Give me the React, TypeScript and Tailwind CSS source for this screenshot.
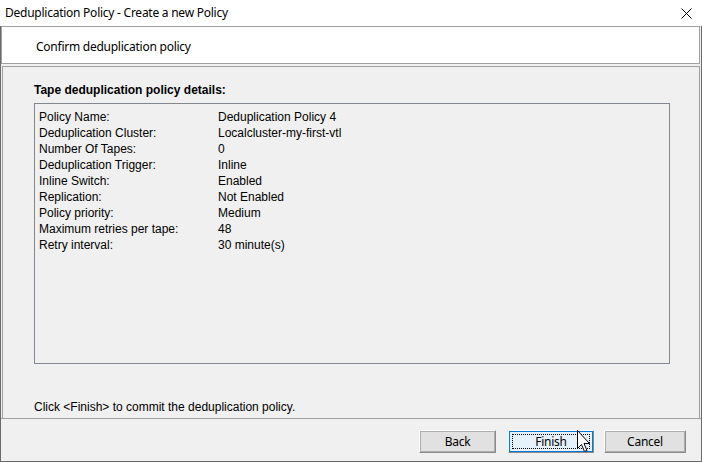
const ROWS: [string, string][] = [
  ['Policy Name:', 'Deduplication Policy 4'],
  ['Deduplication Cluster:', 'Localcluster-my-first-vtl'],
  ['Number Of Tapes:', '0'],
  ['Deduplication Trigger:', 'Inline'],
  ['Inline Switch:', 'Enabled'],
  ['Replication:', 'Not Enabled'],
  ['Policy priority:', 'Medium'],
  ['Maximum retries per tape:', '48'],
  ['Retry interval:', '30 minute(s)'],
]

const ui = "font-['Noto_Sans',sans-serif] tracking-[-0.25px]"
const classic = "font-['Liberation_Sans',Arial,sans-serif]"

function Button({ label, focused, width }: { label: string; focused?: boolean; width: string }) {
  return (
    <div className={`${width} h-[23px] border-t border-l border-white border-b border-r border-b-[#8a8a8a] border-r-[#8a8a8a]`}>
      <div
        className={`h-full w-full flex items-center justify-center text-[12px] text-black ${ui} border ${
          focused ? 'bg-[#e5f1fb] border-[#0078d7]' : 'bg-[#e1e1e1] border-[#adadad]'
        }`}
      >
        {focused ? (
          <div className="w-[calc(100%-4px)] h-[calc(100%-4px)] border border-dotted border-black flex items-center justify-center">
            {label}
          </div>
        ) : (
          label
        )}
      </div>
    </div>
  )
}

export default function App() {
  return (
    <div className="w-[702px] h-[462px] bg-white flex flex-col relative overflow-hidden">
      {/* title bar */}
      <div className="h-[26px] flex items-center justify-between pl-[5px] pr-[10px] shrink-0">
        <span className={`text-[12px] text-black ${ui}`}>Deduplication Policy - Create a new Policy</span>
        <svg width="11" height="11" viewBox="0 0 11 11" className="mt-[1px]">
          <path d="M0.5 0.5 L10.5 10.5 M10.5 0.5 L0.5 10.5" stroke="#000" strokeWidth="1" />
        </svg>
      </div>

      <div className="flex-1 flex flex-col border-l border-r border-b border-[#6a6a6a] bg-[#f0f0f0]">
        {/* header */}
        <div className="h-[38px] bg-white border border-[#a0a0a0] mr-[1px] flex items-start pt-[12px] pl-[34px] shrink-0">
          <span className={`text-[12px] leading-[16px] text-black ${ui}`}>Confirm deduplication policy</span>
        </div>

        {/* body */}
        <div className={`mt-[2px] ml-[1px] mr-[1px] h-[352px] border border-[#a0a0a0] border-b-0 bg-[#f0f0f0] flex flex-col pl-[31px] pr-[29px] ${classic}`}>
          <div className="pt-[15px] text-[12px] font-bold text-black leading-[16px]">Tape deduplication policy details:</div>
          <div className="mt-[5px] h-[261px] border border-[#828790] pl-[4px] pt-[5px]">
            {ROWS.map(([k, v]) => (
              <div key={k} className="flex text-[12px] leading-[16px] text-black">
                <span className="w-[179px] shrink-0">{k}</span>
                <span>{v}</span>
              </div>
            ))}
          </div>
          <div className="mt-[35px] text-[12px] leading-[16px] text-black">Click &lt;Finish&gt; to commit the deduplication policy.</div>
        </div>

        {/* footer */}
        <div className="flex-1 border-t border-[#a0a0a0] flex items-start justify-end gap-[10px] pt-[11px] pr-[15px]">
          <Button label="Back" width="w-[77px]" />
          <div className="ml-[2px]">
            <Button label="Finish" focused width="w-[86px]" />
          </div>
          <Button label="Cancel" width="w-[82px]" />
        </div>
      </div>

      {/* mouse cursor */}
      <svg className="absolute left-[577px] top-[430px]" width="14" height="24" viewBox="0 0 14 24">
        <path
          d="M0.5 0.5 L0.5 18.5 L4.5 14.5 L7.5 21.5 L10 20.5 L7 13.5 L12.5 13.5 Z"
          fill="#fff"
          stroke="#000"
          strokeWidth="1"
          strokeLinejoin="miter"
        />
      </svg>
    </div>
  )
}
